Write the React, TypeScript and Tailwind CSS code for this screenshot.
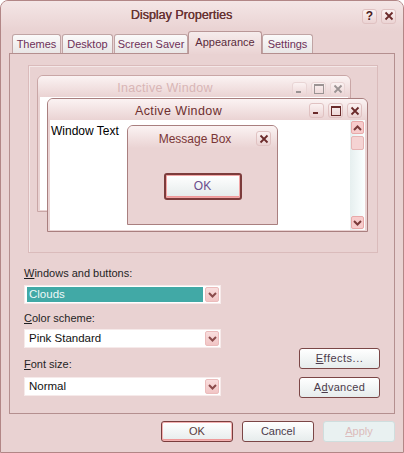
import React from "react";

type Glyph = "min" | "max" | "close";

function CaptionGlyph({ kind, color }: { kind: Glyph; color: string }) {
  if (kind === "min")
    return (
      <svg width="9" height="9" viewBox="0 0 9 9">
        <rect x="1" y="6" width="5" height="2" fill={color} />
      </svg>
    );
  if (kind === "max")
    return (
      <svg width="10" height="10" viewBox="0 0 10 10">
        <rect x="0.5" y="0.5" width="9" height="9" fill="none" stroke={color} />
        <rect x="0" y="0" width="10" height="2" fill={color} />
      </svg>
    );
  return (
    <svg width="10" height="10" viewBox="0 0 10 10">
      <path d="M1.5 1.5L8.5 8.5M8.5 1.5L1.5 8.5" stroke={color} strokeWidth="1.8" />
    </svg>
  );
}

function CaptionButton({ kind, active = true }: { kind: Glyph; active?: boolean }) {
  return (
    <div
      className={`flex h-[15px] w-[15px] items-center justify-center rounded-[3px] border bg-gradient-to-b from-[#fbf2f2] to-[#ebd3d3] ${
        active ? "border-[#e0c2c2]" : "border-[#e9d5d5]"
      }`}
    >
      <CaptionGlyph kind={kind} color={active ? "#6a2a2a" : "#9b9393"} />
    </div>
  );
}

function Chevron({ up = false, color = "#8a4b4b" }: { up?: boolean; color?: string }) {
  return (
    <svg width="9" height="6" viewBox="0 0 9 6">
      <path
        d={up ? "M1 5L4.5 1.5L8 5" : "M1 1L4.5 4.5L8 1"}
        fill="none"
        stroke={color}
        strokeWidth="2"
      />
    </svg>
  );
}

function Dropdown({ value, selected = false }: { value: string; selected?: boolean }) {
  return (
    <div className="flex h-[19px] w-[197px] border border-[#f6eaea] bg-white py-px pl-[2px] pr-px">
      <div
        className={`flex flex-1 items-center pl-[2px] text-[11.5px] ${
          selected ? "bg-[#41a9a6] text-[#eef8f8]" : "text-[#111]"
        }`}
      >
        {value}
      </div>
      <div className="ml-[2px] flex w-[14px] items-center justify-center rounded-[2px] border border-[#ebbcbc] bg-gradient-to-b from-[#f9dede] to-[#f1c5c5]">
        <Chevron />
      </div>
    </div>
  );
}

function PushButton({
  children,
  className = "",
  disabled = false,
  isDefault = false,
}: {
  children: React.ReactNode;
  className?: string;
  disabled?: boolean;
  isDefault?: boolean;
}) {
  const look = disabled
    ? "border-[#cfdede] bg-[#e9f1f1] text-[#dcbcbc]"
    : isDefault
      ? "border-[#7a3c3c] bg-gradient-to-b from-[#ffffff] to-[#e6ecec] text-[#5a3a3a] shadow-[inset_0_0_0_1px_#f3b2b2,inset_0_-2px_0_#ee9a9a]"
      : "border-[#7b4646] bg-gradient-to-b from-[#ffffff] to-[#e6ecec] text-[#4b3b4b]";
  return (
    <div
      className={`flex h-[21px] items-center justify-center rounded-[3px] border text-[11px] ${look} ${className}`}
    >
      {children}
    </div>
  );
}

function Tab({ label, width, selected = false }: { label: string; width: string; selected?: boolean }) {
  return (
    <div
      className={`flex items-center justify-center rounded-t-[3px] border border-b-0 text-[11px] ${width} ${
        selected
          ? "relative z-10 -mb-px h-[23px] border-[#b99797] bg-gradient-to-b from-[#f6ecec] to-[#ead3d3] pb-[2px] text-[#5a2a3a]"
          : "h-[19px] border-[#c0a4a4] bg-gradient-to-b from-[#fbfafa] to-[#e9e6e6] text-[#6e3058]"
      }`}
    >
      {label}
    </div>
  );
}

function Underlined({ first, rest }: { first: string; rest: string }) {
  return (
    <span>
      <span className="underline underline-offset-[1px]">{first}</span>
      {rest}
    </span>
  );
}

// Sample windows shown in the appearance preview
function Preview() {
  return (
    <div className="relative ml-[18px] mt-[11px] h-[188px] w-[350px] border border-[#dabbbb] shadow-[inset_1px_1px_0_#f4e8e8]">
      {/* inactive window */}
      <div className="absolute left-[8px] top-[9px] flex h-[137px] w-[314px] flex-col rounded-t-[6px] border border-[#c9a6a6] bg-[#ead3d3]">
        <div className="flex h-[21px] items-center rounded-t-[5px] bg-gradient-to-b from-[#fbf3f3] to-[#ead3d3] pr-[5px]">
          <div className="flex-1 pt-[3px] text-center text-[12.5px] tracking-[0.3px] text-[#d8b5b5]">Inactive Window</div>
          <div className="flex gap-[4px] pt-[5px]">
            <CaptionButton kind="min" active={false} />
            <CaptionButton kind="max" active={false} />
            <CaptionButton kind="close" active={false} />
          </div>
        </div>
        <div className="mx-[2px] mb-[1px] flex-1 bg-white" />
      </div>

      {/* active window */}
      <div className="absolute left-[18px] top-[32px] flex h-[134px] w-[321px] flex-col rounded-t-[6px] border border-[#a97f7f] bg-[#ead3d3]">
        <div className="flex h-[21px] items-center rounded-t-[5px] bg-gradient-to-b from-[#fbf3f3] to-[#ead3d3] pr-[5px]">
          <div className="flex-1 pt-[4px] text-center text-[12.5px] tracking-[0.4px] text-[#6e2f2f]">Active Window</div>
          <div className="flex gap-[4px] pt-[2px]">
            <CaptionButton kind="min" />
            <CaptionButton kind="max" />
            <CaptionButton kind="close" />
          </div>
        </div>
        <div className="mx-[2px] mb-[1px] flex flex-1 bg-white">
          <div className="flex-1 pl-px pt-[2px] text-[12px] text-black">Window Text</div>
          <div className="flex w-[15px] flex-col bg-gradient-to-r from-[#e6efef] to-[#fbffff] p-px">
            <div className="flex h-[13px] items-center justify-center rounded-[2px] border border-[#e8a9a9] bg-[#f7cccc]">
              <Chevron up color="#7a3a3a" />
            </div>
            <div className="mt-[2px] h-[14px] rounded-[2px] border border-[#e6b4b4] bg-[#f5d3d3]" />
            <div className="flex-1" />
            <div className="flex h-[13px] items-center justify-center rounded-[2px] border border-[#e8a9a9] bg-[#f7cccc]">
              <Chevron color="#7a3a3a" />
            </div>
          </div>
        </div>
      </div>

      {/* message box */}
      <div className="absolute left-[98px] top-[59px] flex h-[100px] w-[151px] flex-col rounded-t-[6px] border border-[#a97f7f] bg-[#ead3d3]">
        <div className="flex h-[22px] items-center rounded-t-[5px] bg-gradient-to-b from-[#fbf3f3] to-[#ead3d3] pr-[6px]">
          <div className="flex-1 pl-[6px] pt-[4px] text-center text-[12px] text-[#7a3535]">Message Box</div>
          <div className="pt-[3px]">
            <CaptionButton kind="close" />
          </div>
        </div>
        <div className="flex flex-1 items-center justify-center">
          <div className="flex h-[27px] w-[78px] items-center justify-center rounded-[3px] border-2 border-[#7c3b3b] bg-gradient-to-b from-[#ffffff] to-[#e4eaea] text-[12px] text-[#6a4c8c] shadow-[inset_0_0_0_1px_#f2a6a6,inset_0_-2px_0_#ef9a9a]">
            OK
          </div>
        </div>
      </div>
    </div>
  );
}

export default function App() {
  return (
    <div className="font-['Liberation_Sans',Arial,sans-serif] flex h-[453px] w-[404px] flex-col rounded-t-[8px] border border-[#b28686] bg-[#e9d2d2]">
      {/* title bar */}
      <div className="flex h-[30px] items-center rounded-t-[7px] bg-gradient-to-b from-[#f4e6e6] to-[#e9d2d2] pr-[7px]">
        <div className="flex-1 pb-px text-center text-[12.5px] text-[#663232] [text-shadow:0.3px_0_0_#663232]">
          Display Properties
        </div>
        <div className="flex gap-[4px]">
          <div className="flex h-[15px] w-[15px] items-center justify-center rounded-[3px] border border-[#e0c2c2] bg-gradient-to-b from-[#fbf2f2] to-[#ebd3d3] text-[12px] font-bold leading-none text-[#4a1c1c]">
            ?
          </div>
          <CaptionButton kind="close" />
        </div>
      </div>

      {/* tabs */}
      <div className="flex h-[22px] items-end pl-[11px]">
        <Tab label="Themes" width="w-[49px]" />
        <div className="ml-px">
          <Tab label="Desktop" width="w-[51px]" />
        </div>
        <div className="ml-px">
          <Tab label="Screen Saver" width="w-[74px]" />
        </div>
        <Tab label="Appearance" width="w-[74px]" selected />
        <Tab label="Settings" width="w-[51px]" />
      </div>

      {/* tab page */}
      <div className="mx-[8px] flex h-[361px] flex-col border border-[#b48f8f]">
        <Preview />

        <div className="flex">
          <div className="ml-[14px] flex flex-col text-[11px] leading-[13px] text-[#1f1f1f]">
            <div className="mt-[14px]">
              <Underlined first="W" rest="indows and buttons:" />
            </div>
            <div className="mt-[5px]">
              <Dropdown value="Clouds" selected />
            </div>
            <div className="mt-[8px]">
              <Underlined first="C" rest="olor scheme:" />
            </div>
            <div className="mt-[4px]">
              <Dropdown value="Pink Standard" />
            </div>
            <div className="mt-[10px]">
              <Underlined first="F" rest="ont size:" />
            </div>
            <div className="mt-[6px]">
              <Dropdown value="Normal" />
            </div>
          </div>

          <div className="ml-[78px] mt-[95px] flex flex-col gap-[8px]">
            <PushButton className="w-[81px] tracking-[0.5px]">
              <Underlined first="E" rest="ffects..." />
            </PushButton>
            <PushButton className="w-[81px] tracking-[0.3px]">
              <span>
                A<span className="underline underline-offset-[1px]">d</span>vanced
              </span>
            </PushButton>
          </div>
        </div>
      </div>

      {/* dialog buttons */}
      <div className="mt-[7px] flex justify-end gap-[9px] pr-[8px]">
        <PushButton className="w-[72px]" isDefault>
          OK
        </PushButton>
        <PushButton className="w-[72px]">Cancel</PushButton>
        <PushButton className="w-[72px]" disabled>
          <Underlined first="A" rest="pply" />
        </PushButton>
      </div>
    </div>
  );
}
